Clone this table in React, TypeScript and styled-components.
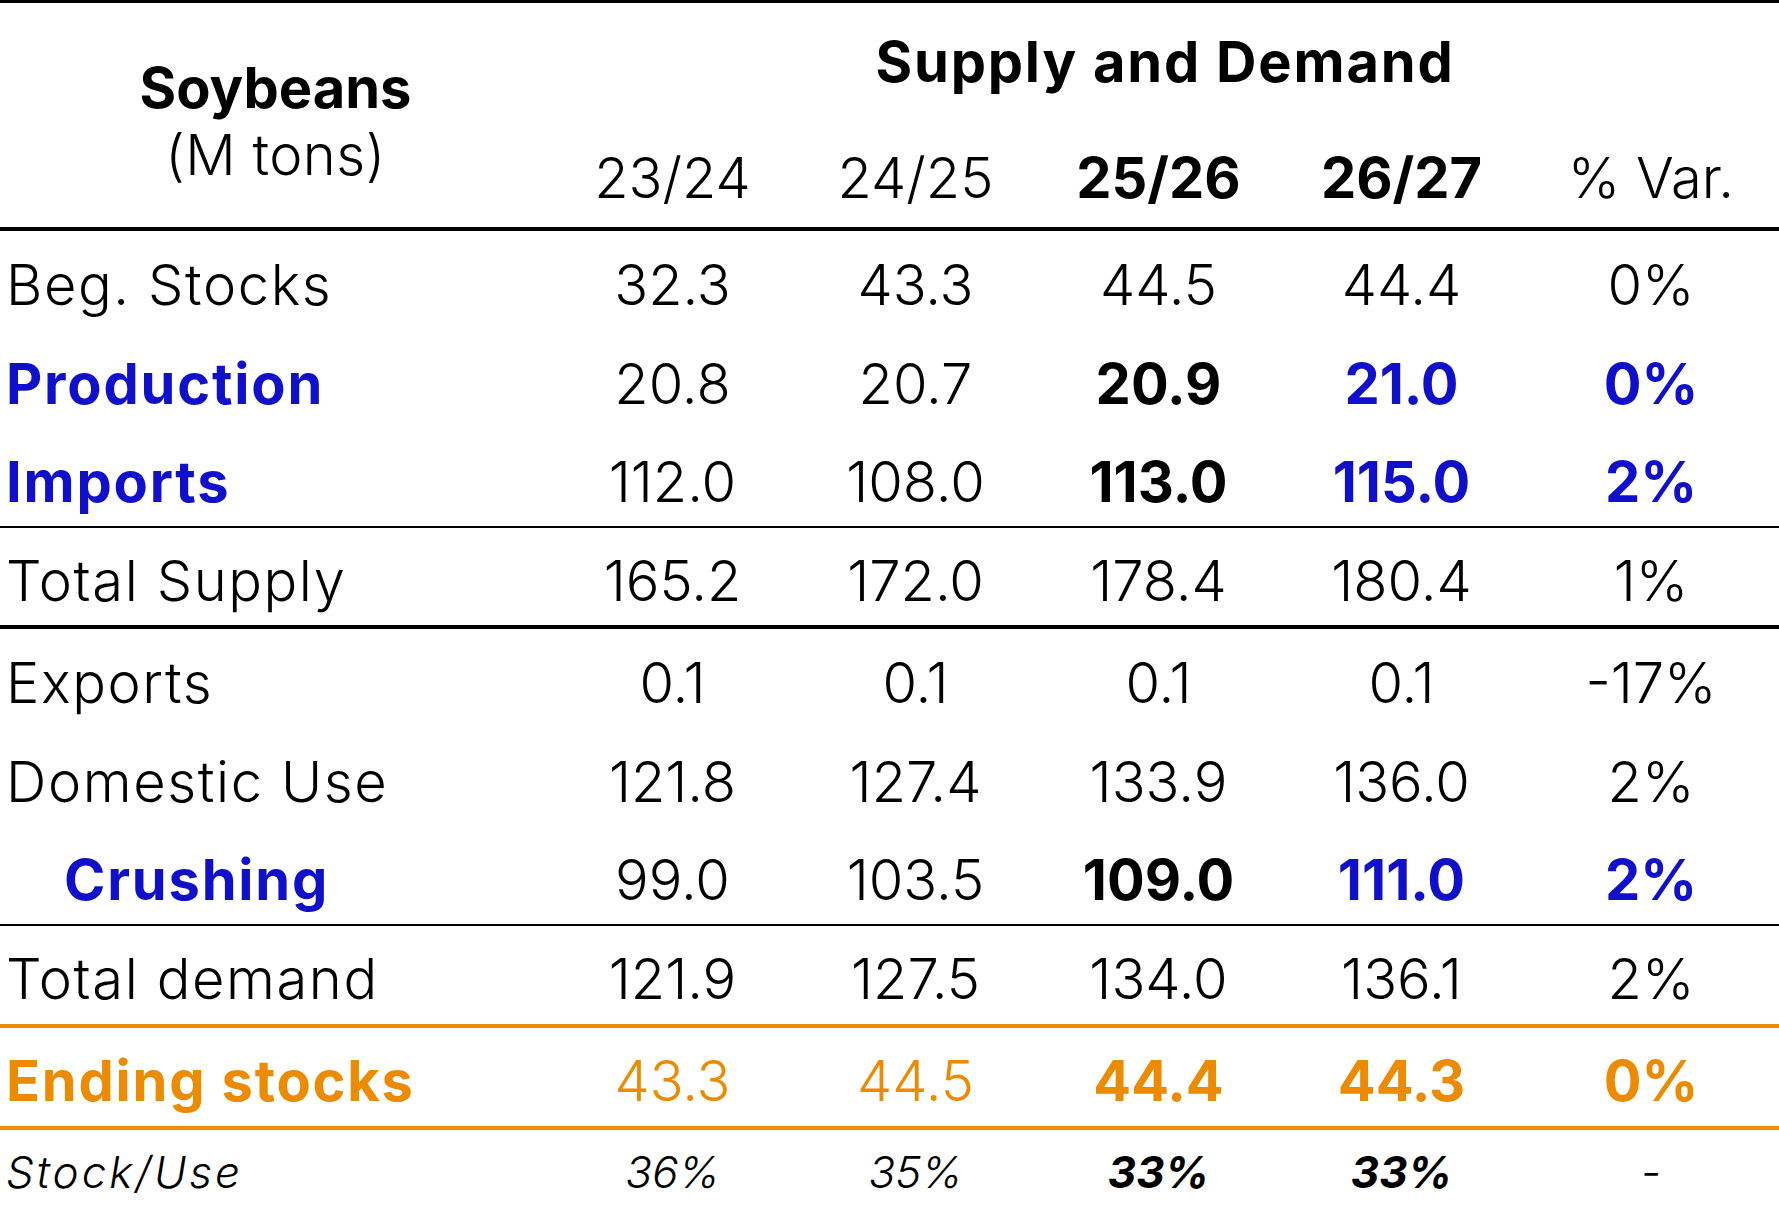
import React from "react";
import styled, { createGlobalStyle } from "styled-components";

const BLACK = "#000000";
const BLUE = "#1010cc";
const ORANGE = "#ec8a00";

const GlobalStyle = createGlobalStyle`
    html, body {
        margin: 0;
        padding: 0;
        background: #ffffff;
    }
    body {
        font-family: Inter, "Open Sans", "Liberation Sans", sans-serif;
        color: ${BLACK};
    }
`;

type Rule = "none" | "thin" | "thick" | "orange";

interface Cell {
    text: string;
    color?: string;
    bold?: boolean;
}

interface RowData {
    label: string;
    labelColor?: string;
    labelBold?: boolean;
    indent?: boolean;
    small?: boolean;
    rule: Rule;
    cells: Cell[];
}

const plain = (text: string, color = BLACK): Cell => ({ text, color });
const strong = (text: string, color = BLACK): Cell => ({ text, color, bold: true });

const rows: RowData[] = [
    {
        label: "Beg. Stocks",
        rule: "none",
        cells: [plain("32.3"), plain("43.3"), plain("44.5"), plain("44.4"), plain("0%")],
    },
    {
        label: "Production",
        labelColor: BLUE,
        labelBold: true,
        rule: "none",
        cells: [plain("20.8"), plain("20.7"), strong("20.9"), strong("21.0", BLUE), strong("0%", BLUE)],
    },
    {
        label: "Imports",
        labelColor: BLUE,
        labelBold: true,
        rule: "thin",
        cells: [plain("112.0"), plain("108.0"), strong("113.0"), strong("115.0", BLUE), strong("2%", BLUE)],
    },
    {
        label: "Total Supply",
        rule: "thick",
        cells: [plain("165.2"), plain("172.0"), plain("178.4"), plain("180.4"), plain("1%")],
    },
    {
        label: "Exports",
        rule: "none",
        cells: [plain("0.1"), plain("0.1"), plain("0.1"), plain("0.1"), plain("-17%")],
    },
    {
        label: "Domestic Use",
        rule: "none",
        cells: [plain("121.8"), plain("127.4"), plain("133.9"), plain("136.0"), plain("2%")],
    },
    {
        label: "Crushing",
        labelColor: BLUE,
        labelBold: true,
        indent: true,
        rule: "thin",
        cells: [plain("99.0"), plain("103.5"), strong("109.0"), strong("111.0", BLUE), strong("2%", BLUE)],
    },
    {
        label: "Total demand",
        rule: "orange",
        cells: [plain("121.9"), plain("127.5"), plain("134.0"), plain("136.1"), plain("2%")],
    },
    {
        label: "Ending stocks",
        labelColor: ORANGE,
        labelBold: true,
        rule: "orange",
        cells: [
            plain("43.3", ORANGE),
            plain("44.5", ORANGE),
            strong("44.4", ORANGE),
            strong("44.3", ORANGE),
            strong("0%", ORANGE),
        ],
    },
    {
        label: "Stock/Use",
        small: true,
        rule: "none",
        cells: [plain("36%"), plain("35%"), strong("33%"), strong("33%"), plain("-")],
    },
];

const years = [
    { text: "23/24", bold: false },
    { text: "24/25", bold: false },
    { text: "25/26", bold: true },
    { text: "26/27", bold: true },
    { text: "% Var.", bold: false },
];

const ruleStyle: Record<Rule, string> = {
    none: "none",
    thin: `2px solid ${BLACK}`,
    thick: `4px solid ${BLACK}`,
    orange: `4px solid ${ORANGE}`,
};

// rows that carry a heavier rule are a little taller in the source sheet
const rowHeight: Record<Rule, number> = {
    none: 99,
    thin: 99,
    thick: 101,
    orange: 102,
};

const COLUMNS = "551px repeat(4, 243px) 1fr";

const Table = styled.div`
    width: 1779px;
    display: flex;
    flex-direction: column;
    font-size: 56px;
`;

const Header = styled.div`
    display: grid;
    grid-template-columns: ${COLUMNS};
    grid-template-rows: 112px 112px;
    border-top: 3px solid ${BLACK};
    border-bottom: 4px solid ${BLACK};
`;

const Commodity = styled.div`
    grid-row: 1 / span 2;
    grid-column: 1;
    display: flex;
    flex-direction: column;
    align-items: center;
    padding-top: 52px;
    line-height: 67px;

    &>:first-child {
        font-weight: 700;
    }
    &>:last-child {
        font-weight: 300;
        letter-spacing: 0.5px;
    }
`;

const Title = styled.div`
    grid-row: 1;
    grid-column: 2 / span 5;
    display: flex;
    align-items: center;
    justify-content: center;
    padding-top: 6px;
    font-weight: 700;
    letter-spacing: 1.8px;
`;

const Year = styled.div<{ $bold: boolean }>`
    grid-row: 2;
    display: flex;
    align-items: center;
    justify-content: center;
    padding-top: 14px;
    font-weight: ${(p) => (p.$bold ? 700 : 300)};
`;

const Row = styled.div<{ $rule: Rule; $small?: boolean }>`
    box-sizing: border-box;
    display: grid;
    grid-template-columns: ${COLUMNS};
    align-items: center;
    height: ${(p) => (p.$small ? 88 : rowHeight[p.$rule])}px;
    padding: ${(p) => (p.$small ? "0 0 4px" : "8px 0 0")};
    border-bottom: ${(p) => ruleStyle[p.$rule]};
    font-size: ${(p) => (p.$small ? "44px" : "56px")};
    font-style: ${(p) => (p.$small ? "italic" : "normal")};
`;

const Label = styled.div<{ $color: string; $bold: boolean; $indent?: boolean; $small?: boolean }>`
    padding-left: ${(p) => (p.$indent ? "64px" : "6px")};
    color: ${(p) => p.$color};
    font-weight: ${(p) => (p.$bold ? 700 : 300)};
    letter-spacing: ${(p) => (p.$small ? "3px" : p.$bold ? "1.8px" : "1.6px")};
    white-space: nowrap;
`;

const Value = styled.div<{ $color: string; $bold: boolean }>`
    text-align: center;
    color: ${(p) => p.$color};
    font-weight: ${(p) => (p.$bold ? 700 : 300)};
    white-space: nowrap;
`;

const App = () => {
    return (
        <>
            <GlobalStyle />
            <Table>
                <Header>
                    <Commodity>
                        <div>Soybeans</div>
                        <div>(M tons)</div>
                    </Commodity>
                    <Title>Supply and Demand</Title>
                    {years.map((y, k) => (
                        <Year key={k} $bold={y.bold} style={{ gridColumn: k + 2 }}>
                            {y.text}
                        </Year>
                    ))}
                </Header>
                {rows.map((r, k) => (
                    <Row key={k} $rule={r.rule} $small={r.small}>
                        <Label
                            $color={r.labelColor || BLACK}
                            $bold={!!r.labelBold}
                            $indent={r.indent}
                            $small={r.small}
                        >
                            {r.label}
                        </Label>
                        {r.cells.map((c, i) => (
                            <Value key={i} $color={c.color || BLACK} $bold={!!c.bold}>
                                {c.text}
                            </Value>
                        ))}
                    </Row>
                ))}
            </Table>
        </>
    );
};

export default App;
